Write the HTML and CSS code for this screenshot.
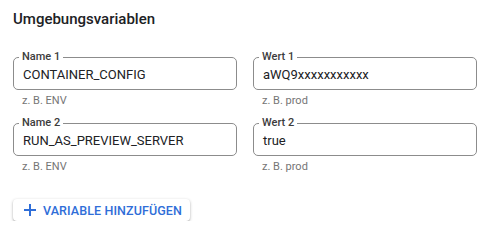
FILE: index.html
```html
<!DOCTYPE html>
<html lang="de">
<head>
<meta charset="utf-8">
<link rel="stylesheet" href="styles.css">
</head>
<body>
<div class="panel">
  <h2 class="title">Umgebungsvariablen</h2>
  <div class="grid">
    <div class="field">
      <fieldset class="box"><legend class="label">Name 1</legend><span class="value">CONTAINER_CONFIG</span></fieldset>
      <div class="hint">z. B. ENV</div>
    </div>
    <div class="field">
      <fieldset class="box"><legend class="label">Wert 1</legend><span class="value">aWQ9xxxxxxxxxxx</span></fieldset>
      <div class="hint">z. B. prod</div>
    </div>
    <div class="field">
      <fieldset class="box"><legend class="label">Name 2</legend><span class="value">RUN_AS_PREVIEW_SERVER</span></fieldset>
      <div class="hint">z. B. ENV</div>
    </div>
    <div class="field">
      <fieldset class="box"><legend class="label">Wert 2</legend><span class="value">true</span></fieldset>
      <div class="hint">z. B. prod</div>
    </div>
  </div>
  <button class="add" type="button">
    <svg class="plus" width="12" height="12" viewBox="0 0 12 12"><path d="M6 0v12M0 6h12" stroke="currentColor" stroke-width="2"/></svg>
    <span>Variable hinzufügen</span>
  </button>
</div>
</body>
</html>
```
FILE: styles.css
```css
* { box-sizing: border-box; }
body {
  margin: 0;
  background: #fff;
  font-family: Roboto, "Liberation Sans", sans-serif;
  color: #212121;
}
.panel {
  padding: 10px 24px 0 13px;
}
.title {
  margin: 0;
  font-size: 15px;
  font-weight: 500;
  line-height: 18px;
  color: #202124;
}
.grid {
  margin-top: 23px;
  display: grid;
  grid-template-columns: 1fr 1fr;
  column-gap: 16px;
  row-gap: 0;
}
.field {
  display: flex;
  flex-direction: column;
}
.box {
  margin: 0;
  border: 1px solid #8c8c8c;
  border-radius: 5px;
  padding: 0 8px 7px 9px;
  height: 39px;
  min-width: 0;
}
.label {
  margin-left: -4px;
  padding: 0 3px;
  font-size: 11px;
  font-weight: 500;
  line-height: 12px;
  color: #3c3c3c;
}
.value {
  display: block;
  font-size: 13px;
  line-height: 19px;
  margin-top: 2px;
  color: #202124;
}
.hint {
  font-size: 11px;
  line-height: 14px;
  padding: 4px 0 0 9px;
  height: 27px;
  color: #757575;
}
.add {
  margin-top: 16px;
  display: inline-flex;
  align-items: center;
  gap: 7px;
  height: 22px;
  padding: 0 8px 0 11px;
  border: none;
  border-radius: 4px;
  background: #fff;
  box-shadow: 0 1px 3px rgba(0,0,0,0.3), 0 1px 1px rgba(0,0,0,0.1);
  color: #2f6ed8;
  font-family: Roboto, "Liberation Sans", sans-serif;
  font-size: 12.5px;
  font-weight: 500;
  text-transform: uppercase;
  letter-spacing: 0.1px;
}
.plus { display: block; }
```
